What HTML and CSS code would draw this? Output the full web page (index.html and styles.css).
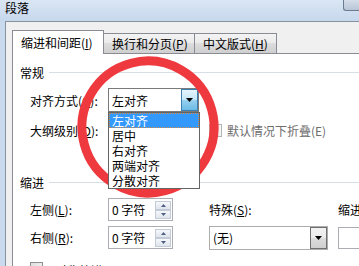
FILE: index.html
```html
<!DOCTYPE html>
<html lang="zh-CN">
<head>
    <meta charset="UTF-8">
    <title>段落</title>
    <link rel="stylesheet" href="styles.css">
</head>
<body>
    <div class="titlebar">
        <span class="title">段落</span>
        <span class="help-btn"></span>
    </div>
    <div class="window">
        <div class="frame-left"></div>
        <div class="dialog">
            <div class="tabs">
                <div class="tab active">缩进和间距(<u>I</u>)</div>
                <div class="tab">换行和分页(<u>P</u>)</div>
                <div class="tab">中文版式(<u>H</u>)</div>
            </div>
            <div class="panel">
                <div class="group-head"><span>常规</span><i></i></div>

                <div class="row first">
                    <label class="lbl">对齐方式(<u>G</u>):</label>
                    <div class="combo focus">
                        <span class="combo-text">左对齐</span>
                        <span class="drop-btn hot">
                            <svg width="7" height="4" viewBox="0 0 7 4"><polygon points="0,0 7,0 3.5,4" fill="#000"/></svg>
                        </span>
                        <ul class="droplist">
                            <li class="selected">左对齐</li>
                            <li>居中</li>
                            <li>右对齐</li>
                            <li>两端对齐</li>
                            <li>分散对齐</li>
                        </ul>
                    </div>
                </div>

                <div class="row">
                    <label class="lbl">大纲级别(<u>O</u>):</label>
                    <div class="combo under"></div>
                    <span class="check disabled"></span>
                    <span class="dim">默认情况下折叠(E)</span>
                </div>

                <div class="group-head second"><span>缩进</span><i></i></div>

                <div class="indent-grid">
                    <label class="lbl">左侧(<u>L</u>):</label>
                    <div class="spin">
                        <span>0 字符</span>
                        <span class="spin-btns">
                            <span class="sb"><svg width="5" height="3" viewBox="0 0 5 3"><polygon points="0,3 5,3 2.5,0" fill="#4d6185"/></svg></span>
                            <span class="sb"><svg width="5" height="3" viewBox="0 0 5 3"><polygon points="0,0 5,0 2.5,3" fill="#4d6185"/></svg></span>
                        </span>
                    </div>
                    <span></span>
                    <label class="lbl">特殊(<u>S</u>):</label>
                    <span></span>
                    <label class="lbl">缩进</label>

                    <label class="lbl">右侧(<u>R</u>):</label>
                    <div class="spin">
                        <span>0 字符</span>
                        <span class="spin-btns">
                            <span class="sb"><svg width="5" height="3" viewBox="0 0 5 3"><polygon points="0,3 5,3 2.5,0" fill="#4d6185"/></svg></span>
                            <span class="sb"><svg width="5" height="3" viewBox="0 0 5 3"><polygon points="0,0 5,0 2.5,3" fill="#4d6185"/></svg></span>
                        </span>
                    </div>
                    <span></span>
                    <div class="combo plain">
                        <span class="combo-text">(无)</span>
                        <span class="drop-btn">
                            <svg width="7" height="4" viewBox="0 0 7 4"><polygon points="0,0 7,0 3.5,4" fill="#000"/></svg>
                        </span>
                    </div>
                    <span></span>
                    <div class="textbox"></div>
                </div>

                <div class="row last">
                    <span class="check"></span>
                    <span>对称缩进(<u>M</u>)</span>
                </div>
            </div>
        </div>
    </div>

    <svg class="mark" width="359" height="266" viewBox="0 0 359 266">
        <ellipse cx="148" cy="127" rx="66" ry="66" transform="rotate(-15 148 127)" fill="none" stroke="#ee3a3f" stroke-width="9"/>
    </svg>
</body>
</html>
```

FILE: styles.css
```css
body {
    margin: 0;
    width: 359px;
    height: 266px;
    overflow: hidden;
    position: relative;
    font-family: "Noto Sans CJK SC", "Microsoft YaHei", sans-serif;
    font-size: 12px;
    color: #000;
    background: #c8d9ed;
}
u {
    text-decoration: underline;
    text-underline-offset: 1px;
}
.titlebar {
    height: 21px;
    display: flex;
    overflow: hidden;
    background: linear-gradient(#dae6f4, #c6d8ec);
}
.title {
    padding: 1px 0 0 5px;
    line-height: 14px;
}
.help-btn {
    margin-left: auto;
    margin-top: -8px;
    width: 15px;
    height: 17px;
    border: 1px solid #6b7b90;
    border-right: none;
    border-radius: 3px 0 0 3px;
    background: linear-gradient(#e8eef6, #b9c6d6);
}
.window {
    display: flex;
    height: 245px;
}
.frame-left {
    flex: 0 0 5px;
    background: #c9daee;
}
.dialog {
    flex: 1;
    min-width: 0;
    overflow: hidden;
    display: flex;
    flex-direction: column;
    background: #f0f0f0;
    border-top: 1px solid #85929f;
    border-left: 1px solid #85929f;
    padding: 8px 0 0 6px;
}
.tabs {
    display: flex;
    align-items: flex-end;
    height: 23px;
}
.tab {
    box-sizing: border-box;
    flex: none;
    height: 20px;
    padding-left: 8px;
    margin-left: -1px;
    display: flex;
    align-items: center;
    border: 1px solid #898c95;
    border-bottom: none;
    background: linear-gradient(#f3f3f3 0%, #ebebeb 50%, #dddddd 50%, #cfcfcf 100%);
    white-space: nowrap;
}
.tab:nth-child(1) { width: 92px; margin-left: 0; }
.tab:nth-child(2) { width: 92px; }
.tab:nth-child(3) { width: 83px; }
.tab.active {
    position: relative;
    z-index: 2;
    height: 24px;
    margin-bottom: -1px;
    background: #fff;
    padding-bottom: 1px;
}
.panel {
    flex: 1;
    position: relative;
    background: #fff;
    border-top: 1px solid #898c95;
    border-left: 1px solid #898c95;
    padding: 10px 0 0 7px;
}
.group-head {
    display: flex;
    align-items: center;
    gap: 5px;
    height: 16px;
}
.group-head i {
    flex: 1;
    height: 1px;
    background: #d5dfe5;
}
.group-head.second {
    margin-top: 32px;
}
.row {
    display: flex;
    align-items: center;
    height: 24px;
    padding-left: 10px;
    margin-top: 6px;
    white-space: nowrap;
}
.row.first {
    margin-top: 8px;
}
.row.last {
    margin-top: 13px;
    align-items: flex-start;
    gap: 12px;
}
.lbl {
    white-space: nowrap;
}
.row .lbl {
    flex: none;
    width: 78px;
}
.combo {
    box-sizing: border-box;
    flex: none;
    position: relative;
    width: 91px;
    height: 24px;
    display: flex;
    align-items: center;
    border: 1px solid #7a7a7a;
    background: #fff;
}
.combo-text {
    padding-left: 3px;
    white-space: nowrap;
}
.drop-btn {
    box-sizing: border-box;
    margin-left: auto;
    width: 17px;
    height: 22px;
    display: flex;
    align-items: center;
    justify-content: center;
    border: 1px solid #707070;
    background: linear-gradient(#f2f2f2 0%, #ebebeb 50%, #dddddd 50%, #cfcfcf 100%);
}
.drop-btn.hot {
    border-color: #3c7fb1;
    background: linear-gradient(#e5f4fc 0%, #c4e5f6 50%, #98d1ef 50%, #6cbbe5 100%);
}
.droplist {
    position: absolute;
    left: -1px;
    top: 23px;
    z-index: 5;
    box-sizing: border-box;
    width: 92px;
    margin: 0;
    padding: 0;
    list-style: none;
    border: 1px solid #646464;
    background: #fff;
}
.droplist li {
    height: 15px;
    line-height: 15px;
    padding-left: 3px;
}
.droplist li.selected {
    background: #3399ff;
    color: #fff;
    outline: 1px dotted #d08a4a;
    outline-offset: -1px;
}
.check {
    box-sizing: border-box;
    flex: none;
    width: 13px;
    height: 13px;
    border: 1px solid #8e8f8f;
    background: linear-gradient(135deg, #dcdcdc, #fdfdfd);
}
.check.disabled {
    margin-left: 10px;
    margin-right: 5px;
    border-color: #b4b4b4;
    background: #f4f4f4;
}
.dim {
    color: #6d6d6d;
}
.indent-grid {
    display: grid;
    grid-template-columns: 78px 65px 36px 119px 10px 40px;
    grid-template-rows: 23px 23px;
    row-gap: 5px;
    align-items: center;
    margin-top: 8px;
    padding-left: 10px;
}
.spin {
    box-sizing: border-box;
    height: 23px;
    display: flex;
    align-items: center;
    padding-left: 3px;
    border: 1px solid #abadb3;
    white-space: nowrap;
}
.spin-btns {
    margin-left: auto;
    margin-right: 1px;
    display: flex;
    flex-direction: column;
}
.sb {
    box-sizing: border-box;
    width: 16px;
    height: 9px;
    display: flex;
    align-items: center;
    justify-content: center;
    border: 1px solid #c3ccd6;
    background: linear-gradient(#f6f8fb, #dfe5ec);
}
.combo.plain {
    width: 119px;
    border-color: #acacac;
}
.textbox {
    box-sizing: border-box;
    height: 22px;
    border: 1px solid #abadb3;
}
.mark {
    position: absolute;
    left: 0;
    top: 0;
    pointer-events: none;
}
```
